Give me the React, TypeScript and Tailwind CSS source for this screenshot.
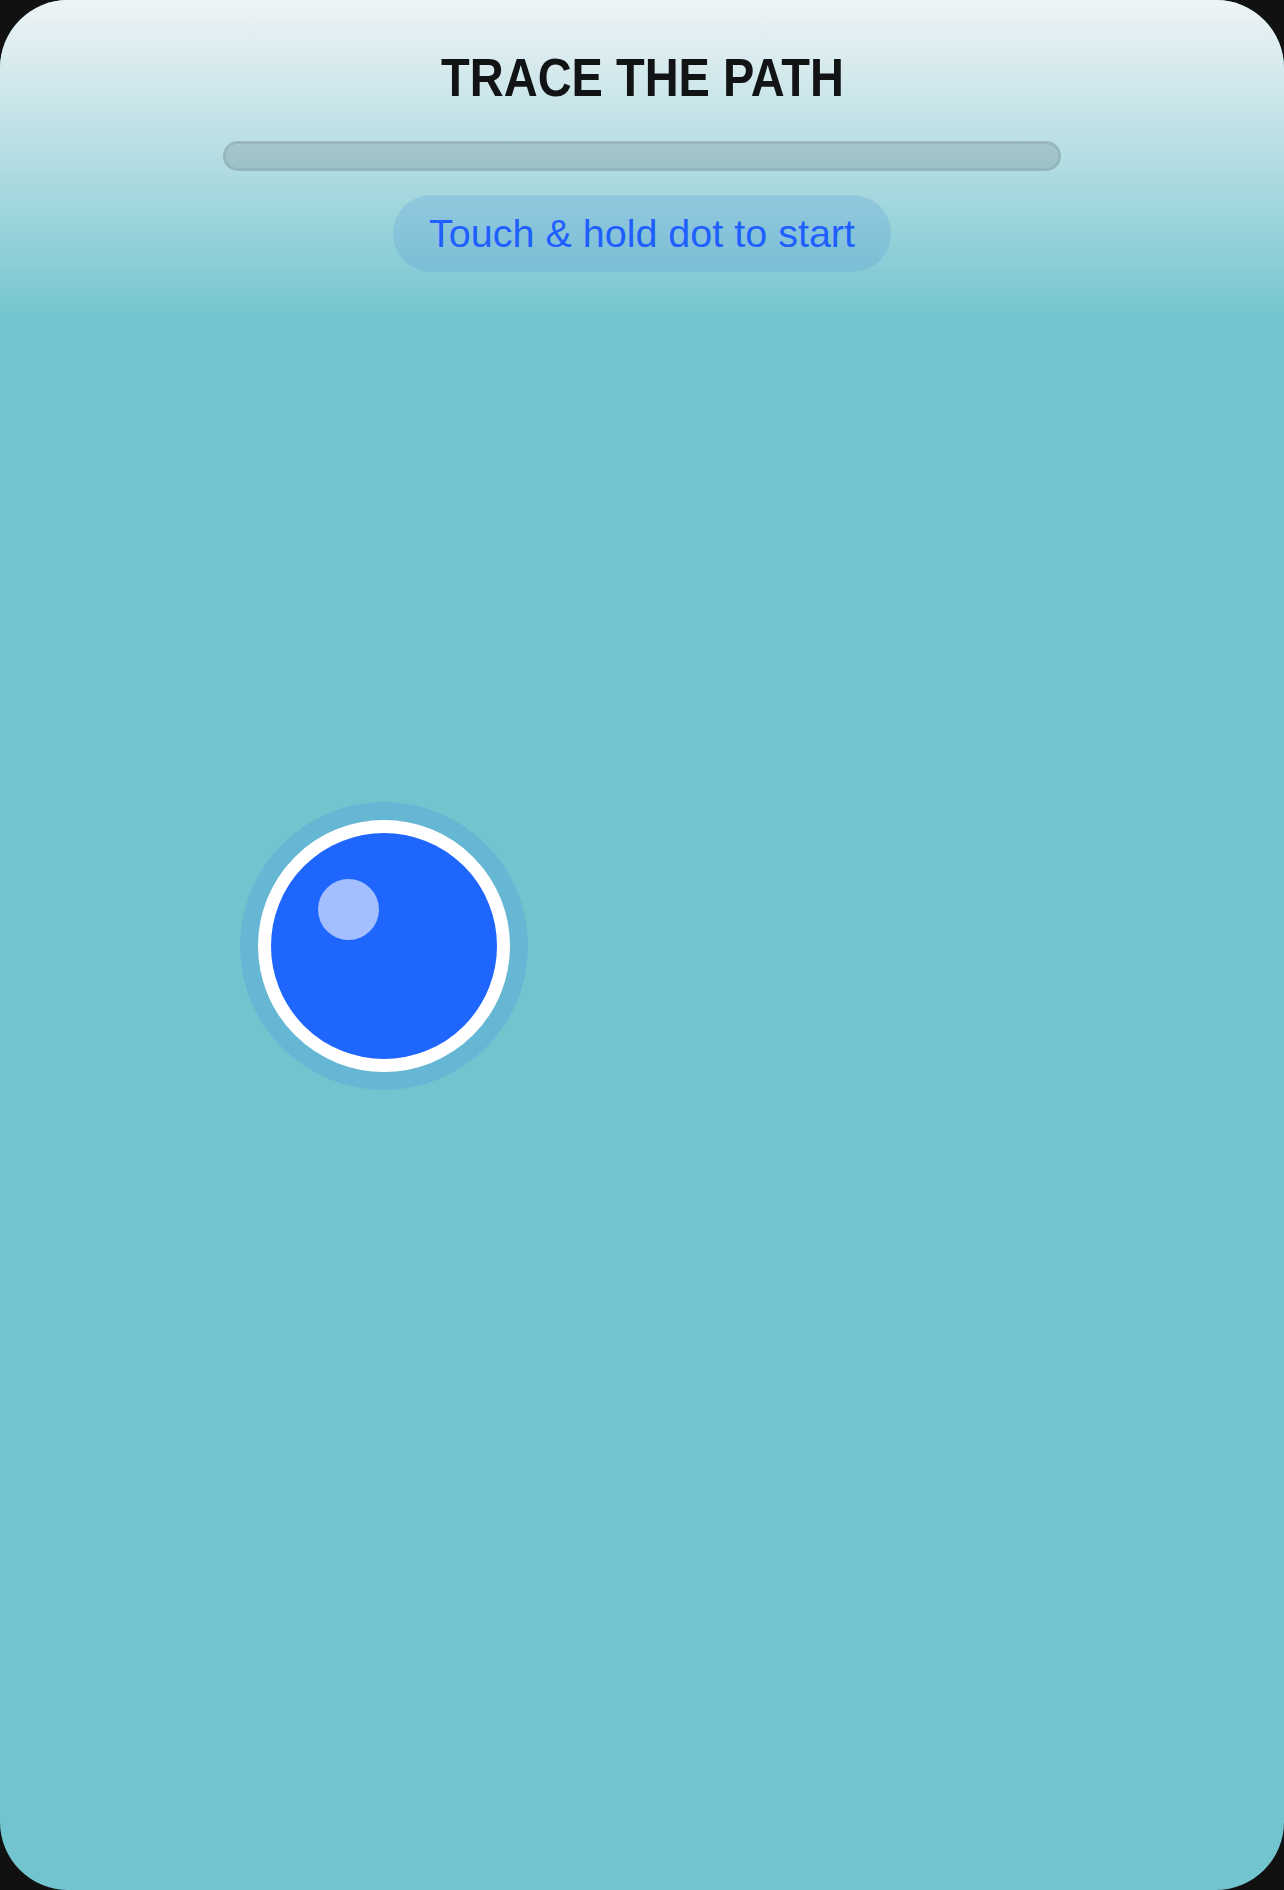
import React from "react";

export default function App() {
  return (
    <div className="w-full h-[1890px] bg-[#111111]">
      <div className="relative h-full w-full overflow-hidden rounded-[68px] bg-[#72c5cf]">
        {/* Header */}
        <div className="flex h-[320px] flex-col items-center bg-linear-to-b from-[#eff4f6] to-[#72c5cf] pt-[50px]">
          <h1 className="inline-block scale-x-[0.87] font-['Liberation_Sans',Arial,sans-serif] text-[54px] font-bold leading-none text-[#121315]">
            TRACE THE PATH
          </h1>
          <div className="mt-[37px] h-[30px] w-[838px] rounded-full border-[3px] border-black/[0.07] bg-black/[0.11]" />
          <div className="mt-[24px] flex h-[77px] items-center justify-center rounded-full bg-[#5696db]/25 px-[36px]">
            <span className="font-['Liberation_Sans',Arial,sans-serif] text-[39.5px] leading-none text-[#1f5fff]">
              Touch &amp; hold dot to start
            </span>
          </div>
        </div>

        {/* Start dot */}
        <div className="absolute left-[240px] top-[802px] flex h-[288px] w-[288px] items-center justify-center rounded-full bg-[#65b7d3]">
          <div className="relative h-[252px] w-[252px] rounded-full border-[13px] border-white bg-[#1f66ff]">
            <div className="absolute left-[47px] top-[46px] h-[61px] w-[61px] rounded-full bg-[#a3bfff]" />
          </div>
        </div>
      </div>
    </div>
  );
}
